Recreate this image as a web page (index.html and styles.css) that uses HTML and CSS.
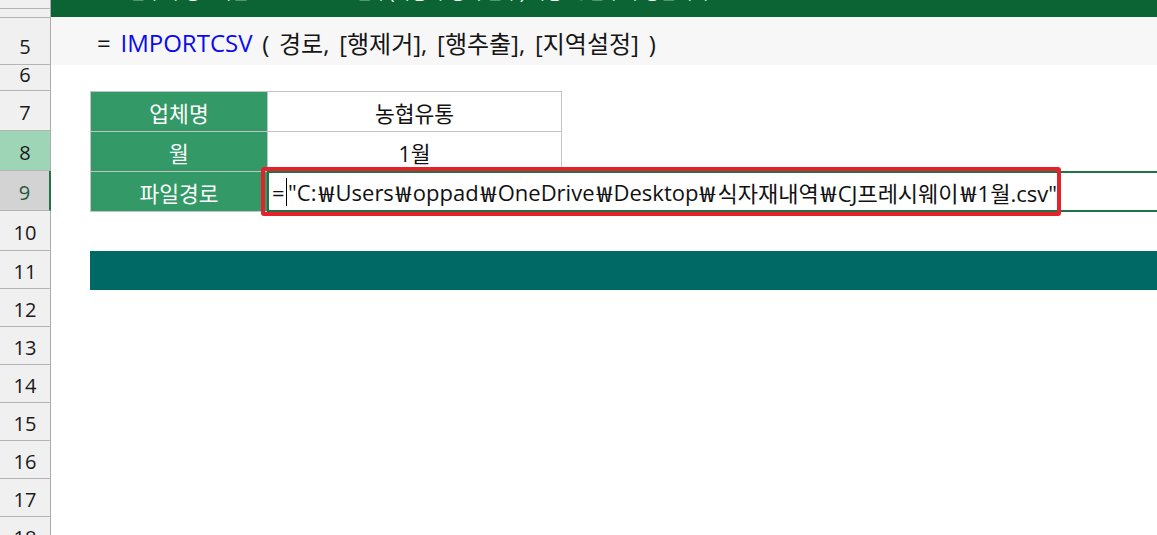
FILE: index.html
```html
<!DOCTYPE html>
<html lang="ko">
<head>
<meta charset="utf-8">
<title>IMPORTCSV</title>
<link rel="stylesheet" href="styles.css">
</head>
<body>
<div class="sheet">
  <div class="heads">
    <div class="rh h9"></div>
    <div class="rh h9"></div>
    <div class="rh r5">5</div>
    <div class="rh r6">6</div>
    <div class="rh r40">7</div>
    <div class="rh r40 hl">8</div>
    <div class="rh r40 sel">9</div>
    <div class="rh r40">10</div>
    <div class="rh r38">11</div>
    <div class="rh r38">12</div>
    <div class="rh r38">13</div>
    <div class="rh r38">14</div>
    <div class="rh r38">15</div>
    <div class="rh r38">16</div>
    <div class="rh r38">17</div>
    <div class="rh r38">18</div>
  </div>
  <div class="content">
    <div class="band"><span class="band-text">※ 함수 구성 : 엑셀 IMPORTCSV 함수(사용자 정의 함수) 사용 시 함수 구성입니다</span></div>
    <div class="formula">= <span class="fn">IMPORTCSV</span> ( 경로, [행제거], [행추출], [지역설정] )</div>
    <div class="gap6"></div>
    <div class="table">
      <div class="trow">
        <div class="lbl">업체명</div>
        <div class="val">농협유통</div>
      </div>
      <div class="trow">
        <div class="lbl">월</div>
        <div class="val">1월</div>
      </div>
      <div class="trow last">
        <div class="lbl">파일경로</div>
        <div class="val edit">=<span class="caret"></span>"C:<span class="w">₩</span>Users<span class="w">₩</span>oppad<span class="w">₩</span>OneDrive<span class="w">₩</span>Desktop<span class="w">₩</span>식자재내역<span class="w">₩</span>CJ프레시웨이<span class="w">₩</span>1월.csv"<div class="redbox"></div></div>
      </div>
    </div>
    <div class="gap10"></div>
    <div class="teal"></div>
  </div>
</div>
</body>
</html>
```
FILE: styles.css
```css
html, body {
  margin: 0;
  padding: 0;
  background: #ffffff;
}
body {
  font-family: "Open Sans", "Noto Sans CJK KR", sans-serif;
  color: #111111;
  overflow: hidden;
}
.sheet {
  display: grid;
  grid-template-columns: 51px 1fr;
  height: 535px;
  overflow: hidden;
}
.heads {
  display: flex;
  flex-direction: column;
  background: #f0f0f0;
}
.rh {
  flex: none;
  box-sizing: border-box;
  width: 51px;
  border-bottom: 1px solid #b4b4b4;
  border-right: 1px solid #ababab;
  display: flex;
  align-items: center;
  justify-content: center;
  font-size: 20px;
  color: #1a1a1a;
  padding-top: 4px;
  line-height: 1;
}
.h9 { height: 9px; padding-top: 0; }
.r5 { height: 47px; padding-top: 12px; }
.r6 { height: 26px; padding-top: 0; padding-bottom: 6px; }
.r40 { height: 40px; }
.r38 { height: 38px; }
.hl { background: #9fd5b7; }
.sel {
  background: #d3d3d3;
  color: #1e5a38;
  border-right: 2px solid #217346;
}
.content {
  display: flex;
  flex-direction: column;
  min-width: 0;
}
.band {
  height: 17px;
  background: #0c6434;
  overflow: hidden;
  padding-left: 56px;
  white-space: nowrap;
}
.band-text {
  display: block;
  color: #ffffff;
  font-size: 18px;
  line-height: 20px;
  margin-top: -18px;
}
.formula {
  height: 48px;
  box-sizing: border-box;
  background: #f7f7f7;
  padding-left: 46px;
  padding-top: 2px;
  font-size: 24px;
  word-spacing: 3.5px;
  display: flex;
  align-items: center;
  white-space: pre;
  color: #151515;
}
.fn { color: #0a0af2; }
.gap6 { height: 26px; }
.table {
  margin-left: 39px;
  display: flex;
  flex-direction: column;
}
.trow {
  display: flex;
  height: 40px;
}
.trow.last { height: 41px; }
.lbl {
  width: 177px;
  box-sizing: border-box;
  border-top: 1px solid #c4c4c4;
  border-left: 1px solid #c4c4c4;
  background: #339966;
  color: #ffffff;
  font-size: 21.5px;
  display: flex;
  align-items: center;
  justify-content: center;
  padding-top: 2px;
}
.trow.last .lbl { border-bottom: 1px solid #c4c4c4; }
.val {
  width: 295px;
  box-sizing: border-box;
  border-top: 1px solid #c4c4c4;
  border-left: 1px solid #c4c4c4;
  border-right: 1px solid #c4c4c4;
  font-size: 21.5px;
  display: flex;
  align-items: center;
  justify-content: center;
  padding-top: 2px;
}
.val.edit {
  position: relative;
  flex: 1;
  width: auto;
  justify-content: flex-start;
  border: 2px solid #217346;
  border-right: none;
  padding-left: 3px;
  padding-top: 0;
  font-size: 22px;
  white-space: pre;
}
.w {
  display: inline-block;
  width: 19px;
  text-align: center;
  transform: scaleX(1.25);
}
.caret {
  display: inline-block;
  width: 1.5px;
  height: 28px;
  background: #000000;
  margin: 0 1px;
}
.redbox {
  position: absolute;
  left: -8px;
  top: -6px;
  width: 800px;
  height: 49px;
  box-sizing: border-box;
  border: 4px solid #e4222b;
  border-radius: 3px;
}
.gap10 { height: 39px; }
.teal {
  margin-left: 39px;
  height: 39px;
  background: #006966;
}
```
